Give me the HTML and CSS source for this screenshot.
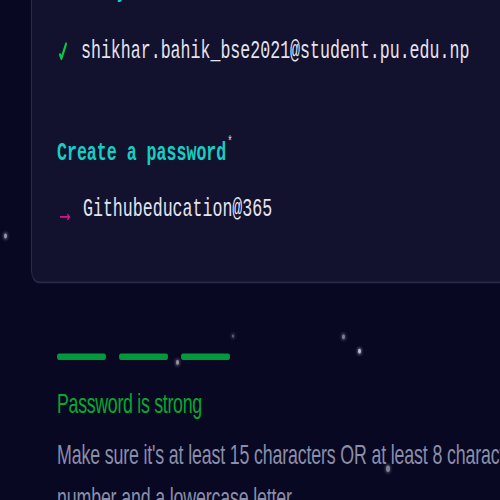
FILE: index.html
```html
<!DOCTYPE html>
<html lang="en">
<head>
<meta charset="utf-8">
<title>Sign up</title>
<link rel="stylesheet" href="styles.css">
</head>
<body>
<div class="stage">
  <div class="stars">
    <span class="star s1"></span>
    <span class="star s2"></span>
    <span class="star s3"></span>
    <span class="star s4"></span>
    <span class="star s5"></span>
    <span class="star s6"></span>
  </div>
  <section class="card">
    <div class="label">Enter your email<sup class="req">*</sup></div>
    <div class="row row-email">
      <svg class="check" width="12" height="12" viewBox="0 0 12 12"><path d="M3 8.2 L4.4 10.6 L9 1.5" fill="none" stroke="#0ac840" stroke-width="2" stroke-linecap="round" stroke-linejoin="round"/></svg>
      <span class="value">shikhar.bahik_bse2021@student.pu.edu.np</span>
    </div>
    <div class="label label-pw">Create a password<sup class="req">*</sup></div>
    <div class="row row-pw">
      <svg class="arrow" width="14" height="6" viewBox="0 0 14 6"><path d="M3 3.6 H12.5 M10.3 1.8 L12.6 3.6 L10.3 5.4" fill="none" stroke="#d4168c" stroke-width="1.1"/></svg>
      <span class="value">Githubeducation@365</span>
    </div>
  </section>
  <section class="strength">
    <div class="bars">
      <span class="bar"></span>
      <span class="bar"></span>
      <span class="bar"></span>
    </div>
    <p class="status">Password is strong</p>
    <p class="hint">Make sure it's at least 15 characters OR at least 8 characters including a<br>number and a lowercase letter.</p>
  </section>
</div>
</body>
</html>
```
FILE: styles.css
```css
html, body {
  margin: 0;
  padding: 0;
  background: #080822;
  overflow: hidden;
  width: 500px;
  height: 500px;
}
.stage {
  position: relative;
  display: flow-root;
  width: 500px;
  transform: scale(1, 1.6);
  transform-origin: 0 0;
}
.card {
  margin: -17px 0 0 31px;
  width: 520px;
  box-sizing: border-box;
  padding: 0 0 35px 25px;
  background: #12112e;
  border: 1px solid #2a2947;
  border-radius: 8px;
  font-family: "Liberation Mono", "DejaVu Sans Mono", monospace;
  font-size: 16.6px;
  line-height: 20px;
}
.label {
  color: #14cfc3;
  font-weight: bold;
  height: 20px;
}
.req {
  font-size: 9px;
  line-height: 0;
  vertical-align: 9px;
  margin-left: 1px;
  color: #d8d8e8;
  font-weight: normal;
}
.label-pw {
  margin-top: 44px;
}
.row {
  display: flex;
  align-items: center;
  height: 20px;
  color: #e4e4ee;
}
.row-email {
  margin-top: 18px;
}
.row-pw {
  margin-top: 15px;
}
.check {
  margin-right: 12px;
  flex: none;
}
.arrow {
  margin-right: 12px;
  margin-top: 7px;
  flex: none;
}
.value {
  white-space: nowrap;
}
.strength {
  padding-left: 57px;
  font-family: "Liberation Sans", Arial, sans-serif;
  font-size: 17.8px;
}
.bars {
  display: flex;
  gap: 13px;
  margin-top: 43.6px;
}
.bar {
  width: 49px;
  height: 4.4px;
  border-radius: 2px;
  background: #009a3a;
}
.status {
  margin: 15px 0 0;
  line-height: 24px;
  color: #06a82f;
  letter-spacing: -0.3px;
}
.hint {
  margin: 7px 0 0;
  line-height: 27px;
  color: #8a8eab;
  white-space: nowrap;
  letter-spacing: -0.15px;
}
.stars {
  position: absolute;
  inset: 0;
  pointer-events: none;
  z-index: 2;
}
.star {
  position: absolute;
  width: 3px;
  height: 3px;
  border-radius: 50%;
  background: #cfd0dc;
  box-shadow: 0 0 2px 1px rgba(200, 200, 220, 0.45);
}
.s1 { left: 4px; top: 146px; opacity: 0.7; }
.s2 { left: 232px; top: 208.5px; opacity: 0.45; width: 2px; height: 2px; }
.s3 { left: 342px; top: 208.8px; opacity: 0.6; }
.s4 { left: 358px; top: 218.4px; opacity: 0.9; }
.s5 { left: 176px; top: 225.3px; opacity: 0.7; }
.s6 { left: 386px; top: 291.3px; opacity: 0.6; width: 4px; height: 4px; }
```
